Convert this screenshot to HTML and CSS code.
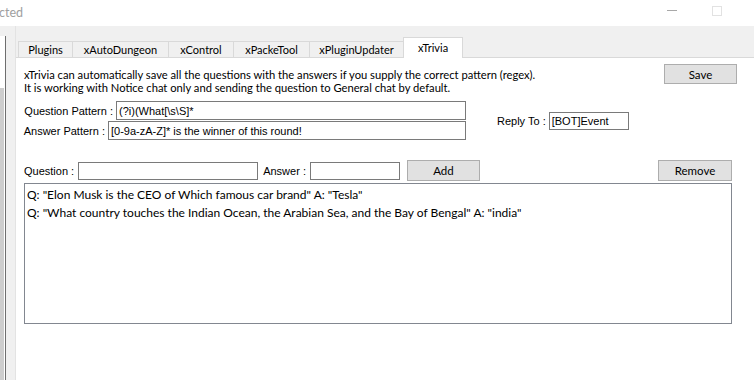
FILE: index.html
```html
<!DOCTYPE html>
<html>

<head>
	<title>xTrivia</title>
	<meta name="viewport" content="width=device-width, initial-scale=1.0">
	<link rel="stylesheet" href="styles.css">
</head>

<body>
	<!-- window title bar, mostly cut off on the left -->
	<div class="titlebar">
		<span class="title">cted</span>
		<div class="caption-buttons">
			<span class="btn-min"></span>
			<span class="btn-max"></span>
		</div>
	</div>

	<div class="window">
		<!-- edge of the plugin list on the left -->
		<div class="side">
			<div class="side-box"></div>
		</div>

		<div class="tabs">
			<div class="tab-strip">
				<div class="tab tab-plugins">Plugins</div>
				<div class="tab tab-dungeon">xAutoDungeon</div>
				<div class="tab tab-control">xControl</div>
				<div class="tab tab-packet">xPackeTool</div>
				<div class="tab tab-updater">xPluginUpdater</div>
				<div class="tab tab-trivia selected">xTrivia</div>
			</div>

			<div class="tab-page">
				<div class="row-head">
					<div class="desc">
						<div>xTrivia can automatically save all the questions with the answers if you supply the correct pattern (regex).</div>
						<div>It is working with Notice chat only and sending the question to General chat by default.</div>
					</div>
					<button class="btn btn-save" type="button">Save</button>
				</div>

				<div class="row-patterns">
					<div class="patterns">
						<div class="field">
							<label for="q-pattern">Question Pattern :</label>
							<input id="q-pattern" class="txt txt-qpattern" type="text" value="(?i)(What[\s\S]*">
						</div>
						<div class="field">
							<label for="a-pattern">Answer Pattern :</label>
							<input id="a-pattern" class="txt txt-apattern" type="text" value="[0-9a-zA-Z]* is the winner of this round!">
						</div>
					</div>
					<div class="field reply">
						<label for="reply-to">Reply To :</label>
						<input id="reply-to" class="txt txt-reply" type="text" value="[BOT]Event">
					</div>
				</div>

				<div class="row-add">
					<label for="question">Question :</label>
					<input id="question" class="txt txt-question" type="text">
					<label for="answer" class="lbl-answer">Answer :</label>
					<input id="answer" class="txt txt-answer" type="text">
					<button class="btn btn-add" type="button">Add</button>
					<button class="btn btn-remove" type="button">Remove</button>
				</div>

				<div class="listbox">
					<div class="item">Q: "Elon Musk is the CEO of Which famous car brand" A: "Tesla"</div>
					<div class="item">Q: "What country touches the Indian Ocean, the Arabian Sea, and the Bay of Bengal" A: "india"</div>
				</div>
			</div>
		</div>
	</div>
</body>

</html>
```

FILE: styles.css
```css
body {
    margin: 0;
    width: 754px;
    height: 380px;
    overflow: hidden;
    background: #f0f0f0;
    font-family: Lato, "Noto Sans", sans-serif;
    font-size: 12px;
    color: #000;
}

/* title bar */

.titlebar {
    height: 26px;
    background: #fff;
    display: flex;
    align-items: center;
    justify-content: space-between;
}

.title {
    margin-left: -1px;
    margin-top: -2px;
    color: #a0a0a0;
    font-size: 12.5px;
}

.caption-buttons {
    display: flex;
    align-items: center;
    margin-right: 32px;
    margin-top: -5px;
}

.btn-min {
    width: 10px;
    height: 1px;
    background: #a8a8a8;
    margin-right: 35px;
}

.btn-max {
    width: 8px;
    height: 8px;
    border: 1px solid #e2e2e2;
}

/* window body */

.window {
    display: flex;
    height: 354px;
}

.side {
    width: 15px;
    flex: none;
    padding-top: 10px;
    border-right: 1px solid #e3e3e3;
    display: flex;
    flex-direction: column;
}

.side-box {
    width: 6px;
    flex: 1;
    background: linear-gradient(to bottom, #fff 0, #fff 52px, #cdcdcd 52px);
    box-shadow: inset -1px 0 0 #6e6e6e, inset -2px 0 0 #fff;
}

.tabs {
    flex: 1;
    display: flex;
    flex-direction: column;
}

/* tab headers */

.tab-strip {
    height: 31px;
    display: flex;
    align-items: flex-end;
    padding-left: 2px;
    box-sizing: border-box;
}

.tab {
    height: 16px;
    line-height: 15px;
    box-sizing: border-box;
    border: 1px solid #d9d9d9;
    border-bottom: none;
    border-right: none;
    background: #f0f0f0;
    text-align: center;
    font-size: 11px;
    white-space: nowrap;
}

.tab-plugins { width: 54px; }
.tab-dungeon { width: 96px; }
.tab-control { width: 65px; }
.tab-packet { width: 76px; }
.tab-updater { width: 94px; }

.tab.selected {
    width: 60px;
    height: 21px;
    line-height: 19px;
    background: #fff;
    border: 1px solid #d9d9d9;
    border-bottom: none;
    margin-bottom: -1px;
    position: relative;
    z-index: 1;
}

/* tab page */

.tab-page {
    flex: 1;
    background: #fff;
    border-top: 1px solid #d9d9d9;
    padding: 6px 0 0 8px;
}

.row-head {
    display: flex;
    justify-content: space-between;
    align-items: flex-start;
    width: 713px;
}

.desc {
    margin-top: 4px;
    font-size: 11.2px;
    line-height: 13px;
    white-space: nowrap;
}

.btn {
    font-family: Lato, "Noto Sans", sans-serif;
    font-size: 11.5px;
    background: #e1e1e1;
    border: 1px solid #adadad;
    padding: 0;
    color: #000;
    flex: none;
}

.btn-save {
    width: 73px;
    height: 20px;
}

.row-patterns {
    display: flex;
    align-items: center;
    margin-top: 7px;
}

.patterns {
    display: flex;
    flex-direction: column;
    align-items: flex-end;
    gap: 1px;
    width: 442px;
    flex: none;
}

.field {
    display: flex;
    align-items: center;
    white-space: nowrap;
}

label {
    font-family: "Liberation Sans", sans-serif;
    font-size: 11px;
    margin-right: 3px;
    white-space: nowrap;
}

.txt {
    box-sizing: border-box;
    flex: none;
    height: 19px;
    border: 1px solid #7a7a7a;
    padding: 0 2px;
    font-family: "Liberation Sans", sans-serif;
    font-size: 11px;
    color: #000;
    background: #fff;
    outline: none;
}

.txt-qpattern { width: 350px; }
.txt-apattern { width: 358px; }

.reply {
    margin-left: 31px;
}

.txt-reply {
    width: 80px;
    height: 18px;
}

.row-add {
    display: flex;
    align-items: center;
    margin-top: 20px;
    width: 708px;
}

.txt-question {
    width: 180px;
    height: 18px;
    margin-left: 1px;
}

.lbl-answer {
    margin-left: 5px;
}

.txt-answer {
    width: 90px;
    height: 18px;
    margin-left: 1px;
}

.btn-add {
    width: 73px;
    height: 21px;
    margin-left: 7px;
}

.btn-remove {
    width: 74px;
    height: 21px;
    margin-left: auto;
}

/* question list */

.listbox {
    box-sizing: border-box;
    width: 708px;
    height: 141px;
    margin-top: 2px;
    border: 1px solid #828790;
    padding: 2px 0 0 2px;
    font-size: 12px;
}

.item {
    height: 18px;
    line-height: 18px;
    white-space: nowrap;
}
```
